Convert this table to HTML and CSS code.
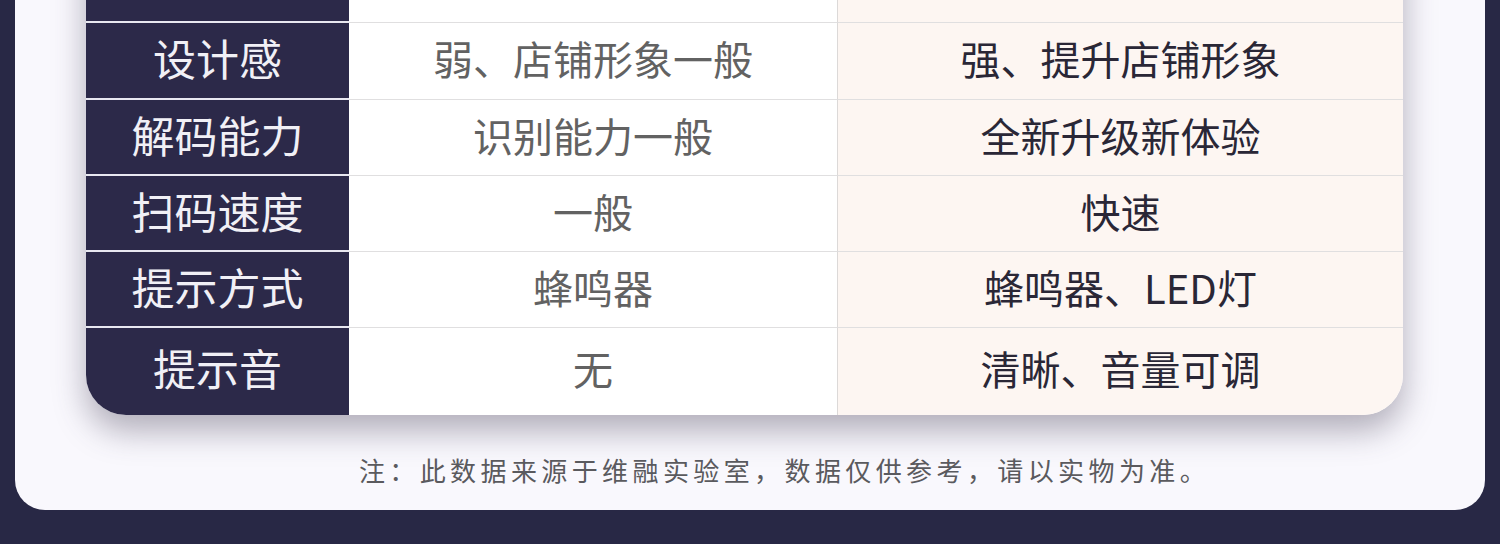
FILE: index.html
```html
<!DOCTYPE html>
<html lang="zh-CN">
<head>
<meta charset="utf-8">
<link rel="stylesheet" href="styles.css">
</head>
<body>
<div class="card">
  <div class="table">
    <div class="row first">
      <div class="cell head"></div>
      <div class="cell old"></div>
      <div class="cell new"></div>
    </div>
    <div class="row second">
      <div class="cell head">设计感</div>
      <div class="cell old">弱、店铺形象一般</div>
      <div class="cell new">强、提升店铺形象</div>
    </div>
    <div class="row">
      <div class="cell head">解码能力</div>
      <div class="cell old">识别能力一般</div>
      <div class="cell new">全新升级新体验</div>
    </div>
    <div class="row">
      <div class="cell head">扫码速度</div>
      <div class="cell old">一般</div>
      <div class="cell new">快速</div>
    </div>
    <div class="row">
      <div class="cell head">提示方式</div>
      <div class="cell old">蜂鸣器</div>
      <div class="cell new">蜂鸣器、LED灯</div>
    </div>
    <div class="row last">
      <div class="cell head">提示音</div>
      <div class="cell old">无</div>
      <div class="cell new">清晰、音量可调</div>
    </div>
  </div>
  <p class="note">注：此数据来源于维融实验室，数据仅供参考，请以实物为准。</p>
</div>
</body>
</html>
```
FILE: styles.css
```css
html, body {
  margin: 0;
  padding: 0;
}
body {
  background: #282845;
  font-family: "Noto Sans CJK SC", "Noto Sans", sans-serif;
  width: 1500px;
  height: 544px;
  overflow: hidden;
}
.card {
  margin: -53px 15px 0 15px;
  width: 1470px;
  background: #f9f8fd;
  border-radius: 0 0 30px 30px;
  padding: 0 82px 25px 71px;
  box-sizing: border-box;
}
.table {
  width: 1317px;
  border-radius: 0 0 40px 40px;
  overflow: hidden;
  box-shadow: 0 16px 32px rgba(70, 62, 88, 0.4);
  background: #fff;
}
.row {
  display: grid;
  grid-template-columns: 263px 489px 1fr;
  height: 76px;
}
.row.second {
  height: 77px;
}
.row.last {
  height: 87px;
}
.cell {
  display: flex;
  align-items: center;
  justify-content: center;
  box-sizing: border-box;
  border-bottom: 1px solid #e0dfe0;
  line-height: 1;
  padding-bottom: 6px;
}
.row.last .cell {
  border-bottom: none;
  padding-bottom: 8px;
}
.head {
  background: #2c2949;
  color: #f1f0f6;
  font-size: 43px;
  border-bottom: 2px solid #e8e7f0;
}
.old {
  background: #ffffff;
  color: #626262;
  font-size: 40px;
  border-right: 1px solid #dcd9d8;
}
.new {
  background: #fdf6f2;
  color: #2a2736;
  font-size: 40px;
  font-weight: 400;
}
.note {
  margin: 40px 0 0 0;
  padding-left: 80px;
  text-align: center;
  font-size: 26px;
  line-height: 30px;
  letter-spacing: 4.4px;
  color: #5a5a5e;
}
```
